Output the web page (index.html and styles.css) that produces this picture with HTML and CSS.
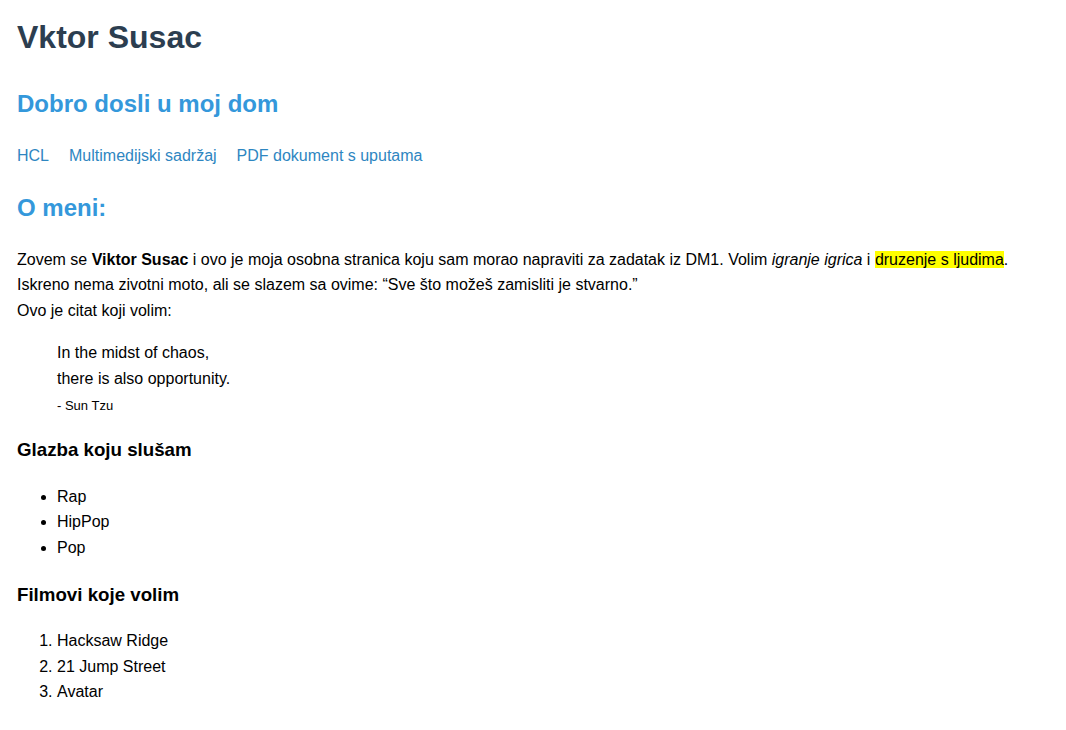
FILE: index.html
```html
<!DOCTYPE html>
<html lang="hr">
<head>
<meta charset="utf-8">
<title>Vktor Susac</title>
<link rel="stylesheet" href="styles.css">
</head>
<body>
<h1 class="title">Vktor Susac</h1>
<h2 class="sub">Dobro dosli u moj dom</h2>
<nav class="nav">
  <a href="#">HCL</a>
  <a href="#">Multimedijski sadržaj</a>
  <a href="#">PDF dokument s uputama</a>
</nav>
<h2 class="sub">O meni:</h2>
<p class="text">Zovem se <strong>Viktor Susac</strong> i ovo je moja osobna stranica koju sam morao napraviti za zadatak iz DM1. Volim <em>igranje igrica</em> i <mark>druzenje s ljudima</mark>.<br>
Iskreno nema zivotni moto, ali se slazem sa ovime: <q>Sve što možeš zamisliti je stvarno.</q><br>
Ovo je citat koji volim:</p>
<blockquote class="quote">
  <p>In the midst of chaos,<br>there is also opportunity.</p>
  <small>- Sun Tzu</small>
</blockquote>
<h3 class="sec">Glazba koju slušam</h3>
<ul class="list">
  <li>Rap</li>
  <li>HipPop</li>
  <li>Pop</li>
</ul>
<h3 class="sec sec-next">Filmovi koje volim</h3>
<ol class="list list-last">
  <li>Hacksaw Ridge</li>
  <li>21 Jump Street</li>
  <li>Avatar</li>
</ol>
</body>
</html>
```
FILE: styles.css
```css
body {
  margin: 0;
  padding: 0 17px;
  font-family: "Liberation Sans", Arial, sans-serif;
  font-size: 16px;
  line-height: 1.6;
  color: #000;
  background: #fff;
}
.title {
  font-size: 32px;
  line-height: 1.2;
  color: #2c3e50;
  margin: 18px 0 0;
}
.sub {
  font-size: 24px;
  line-height: 1.2;
  color: #3498db;
  margin: 34px 0 0;
}
.nav {
  display: flex;
  gap: 20px;
  margin-top: 24px;
}
.nav a {
  color: #2e86c1;
  text-decoration: none;
}
.nav + .sub {
  margin-top: 25px;
}
.text {
  margin: 24px 0 0;
}
q {
  quotes: "\201C" "\201D";
}
mark {
  background: #ffff00;
  color: #000;
}
.quote {
  margin: 17px 40px 0;
}
.quote p {
  margin: 0;
  line-height: 26px;
}
.quote small {
  font-size: 13px;
}
.sec {
  font-size: 18.72px;
  margin: 17px 0 0;
}
.sec-next {
  margin-top: 20px;
}
.list {
  margin: 19px 0 0;
  padding-left: 40px;
}
.list-last {
  margin-top: 18px;
}
.list li {
  line-height: 25.5px;
}
```
